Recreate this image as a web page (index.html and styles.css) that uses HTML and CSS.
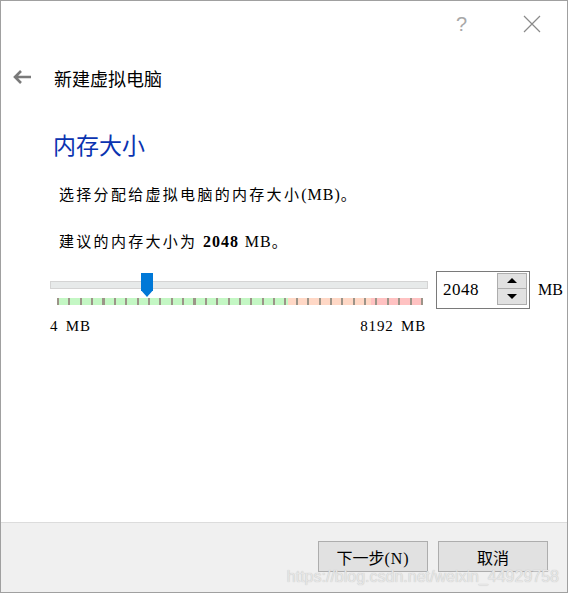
FILE: index.html
```html
<!DOCTYPE html>
<html lang="zh-CN">
  <head>
    <meta charset="UTF-8" />
    <title>新建虚拟电脑</title>
    <link rel="stylesheet" href="styles.css">
  </head>
  <body>
    <div class="window">
      <div class="titlebar">
        <span class="help">?</span>
        <svg class="close" width="18" height="18" viewBox="0 0 18 18">
          <path d="M1 1L17 17M17 1L1 17" stroke="#8a8a8a" stroke-width="1.2" fill="none" />
        </svg>
      </div>

      <div class="header">
        <svg class="back" width="20" height="16" viewBox="0 0 20 16">
          <path d="M19 8H3M9 2L3 8l6 6" stroke="#7a7a7a" stroke-width="2.6" fill="none" />
        </svg>
        <span class="header-title">新建虚拟电脑</span>
      </div>

      <div class="content">
        <h2 class="page-title">内存大小</h2>
        <p class="text">选择分配给虚拟电脑的内存大小<span class="latin">(MB)</span>。</p>
        <p class="text">建议的内存大小为 <b class="latin">2048</b> <span class="latin">MB</span>。</p>

        <div class="memory-row">
          <div class="slider">
            <div class="track"></div>
            <div class="handle"></div>
            <div class="ticks"></div>
            <div class="slider-labels">
              <span>4 MB</span>
              <span>8192 MB</span>
            </div>
          </div>
          <div class="spinbox">
            <span class="spin-value">2048</span>
            <div class="spin-buttons">
              <div class="spin-btn"><span class="arrow-up"></span></div>
              <div class="spin-btn"><span class="arrow-down"></span></div>
            </div>
          </div>
          <span class="unit">MB</span>
        </div>
      </div>

      <div class="footer">
        <button class="btn">下一步<span class="latin">(N)</span></button>
        <button class="btn">取消</button>
        <span class="watermark">https://blog.csdn.net/weixin_44929758</span>
      </div>
    </div>
  </body>
</html>
```

FILE: styles.css
```css
:root {
  --border: #a0a0a0;
  --accent: #0078d7;
  --title: #0a33b0;
  --panel: #f0f0f0;
  --button: #e1e1e1;
  --button-border: #adadad;
}

body {
  margin: 0;
  font-family: "Liberation Serif", "Noto Sans CJK SC", serif;
  color: #000;
  background: #fff;
}

.window {
  position: relative;
  box-sizing: border-box;
  width: 568px;
  height: 593px;
  border: 1px solid var(--border);
  display: flex;
  flex-direction: column;
  background: #fff;
}

/* title bar */
.titlebar {
  height: 44px;
  display: flex;
  align-items: center;
  justify-content: flex-end;
  padding-right: 26px;
  gap: 56px;
}

.help {
  font-family: "Liberation Sans", sans-serif;
  font-size: 20px;
  color: #a8a8a8;
  margin-top: 2px;
}

.close {
  margin-top: 1px;
}

.header {
  height: 64px;
  display: flex;
  align-items: center;
}

.back {
  margin-left: 11px;
  margin-right: 22px;
}

.header-title {
  font-family: "Noto Sans CJK SC", sans-serif;
  font-size: 18px;
  color: #000;
  margin-top: 1px;
}

/* main */
.content {
  padding-left: 49px;
}

.page-title {
  margin: 20px 0 0 3px;
  font-family: "Noto Sans CJK SC", sans-serif;
  font-weight: normal;
  font-size: 23px;
  line-height: 30px;
  color: var(--title);
}

.text {
  margin: 24px 0 0 9px;
  font-family: "Noto Sans CJK SC", sans-serif;
  font-size: 15px;
  line-height: 22px;
  letter-spacing: 2.3px;
}

.latin {
  font-family: "Liberation Serif", serif;
  font-size: 16px;
  letter-spacing: 1px;
}

.memory-row {
  display: flex;
  align-items: flex-start;
  margin-top: 18px;
}

/* slider */
.slider {
  position: relative;
  width: 378px;
}

.track {
  box-sizing: border-box;
  margin-top: 10px;
  height: 8px;
  background: #e7eaea;
  border: 1px solid #d4d4d4;
}

.handle {
  position: absolute;
  left: 91px;
  top: 2px;
  width: 12px;
  height: 24px;
  background: var(--accent);
  clip-path: polygon(0 0, 100% 0, 100% 72%, 50% 100%, 0 72%);
}

.ticks {
  margin: 9px 0 0 7px;
  width: 366px;
  height: 7px;
  background:
    repeating-linear-gradient(90deg, #9c9488 0 2px, transparent 2px 11.375px),
    linear-gradient(90deg, #c4f7c4 0 231px, #ffd8c6 231px 314px, #ffc2c2 314px 366px);
}

.slider-labels {
  display: flex;
  justify-content: space-between;
  margin-top: 12px;
  padding-right: 2px;
  font-size: 15px;
  line-height: 18px;
  letter-spacing: 0.8px;
  word-spacing: 3px;
}

/* spin box */
.spinbox {
  box-sizing: border-box;
  margin-left: 8px;
  width: 94px;
  height: 38px;
  border: 1px solid #7a7a7a;
  display: flex;
  align-items: center;
  justify-content: space-between;
  padding: 0 2px 0 6px;
}

.spin-value {
  font-size: 17px;
  letter-spacing: 0.5px;
}

.spin-buttons {
  display: flex;
  flex-direction: column;
  margin-top: -3px;
}

.spin-btn {
  box-sizing: border-box;
  width: 30px;
  height: 16px;
  background: var(--button);
  border: 1px solid var(--button-border);
  display: flex;
  align-items: center;
  justify-content: center;
}

.spin-btn + .spin-btn {
  border-top: none;
}

.arrow-up,
.arrow-down {
  width: 0;
  height: 0;
  border-left: 5px solid transparent;
  border-right: 5px solid transparent;
}

.arrow-up {
  border-bottom: 5px solid #000;
}

.arrow-down {
  border-top: 5px solid #000;
}

.unit {
  margin-left: 8px;
  margin-top: 10px;
  font-size: 16px;
}

/* footer */
.footer {
  position: relative;
  margin-top: auto;
  height: 70px;
  box-sizing: border-box;
  border-top: 1px solid #dcdcdc;
  background: var(--panel);
  display: flex;
  justify-content: flex-end;
  align-items: flex-start;
  gap: 10px;
  padding: 18px 19px 0 0;
}

.btn {
  width: 110px;
  height: 31px;
  background: var(--button);
  border: 1px solid var(--button-border);
  font-family: "Noto Sans CJK SC", sans-serif;
  font-size: 16px;
  color: #000;
  padding: 0;
}

.watermark {
  position: absolute;
  right: 8px;
  bottom: 6px;
  font-family: "Liberation Sans", sans-serif;
  font-size: 16px;
  color: #e6e6e6;
  text-shadow: 0 0 1px #b8b8b8;
  pointer-events: none;
}
```
